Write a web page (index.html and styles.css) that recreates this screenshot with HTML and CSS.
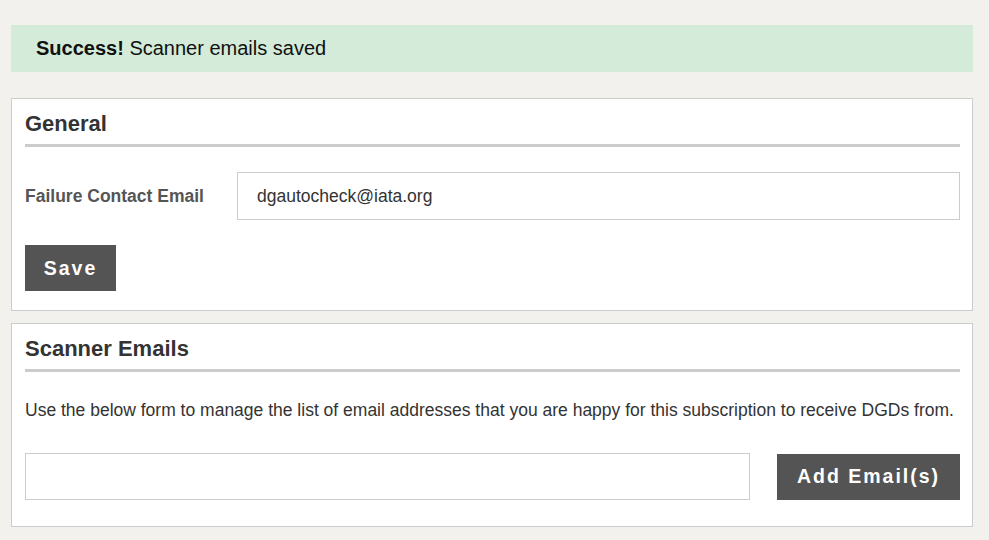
FILE: index.html
```html
<!DOCTYPE html>
<html>
<head>
<meta charset="utf-8">
<link rel="stylesheet" href="styles.css">
</head>
<body>
<div class="page">
  <div class="alert"><strong>Success!</strong> Scanner emails saved</div>

  <section class="panel">
    <h2 class="panel-title">General</h2>
    <div class="field-row">
      <label class="field-label">Failure Contact Email</label>
      <div class="text-input">dgautocheck@iata.org</div>
    </div>
    <button class="btn btn-save">Save</button>
  </section>

  <section class="panel">
    <h2 class="panel-title">Scanner Emails</h2>
    <p class="panel-text">Use the below form to manage the list of email addresses that you are happy for this subscription to receive DGDs from.</p>
    <div class="add-row">
      <div class="text-input add-input"></div>
      <button class="btn btn-add">Add Email(s)</button>
    </div>
  </section>
</div>
</body>
</html>
```
FILE: styles.css
```css
html, body {
  margin: 0;
  padding: 0;
  background: #f2f1ed;
  font-family: "Liberation Sans", Arial, sans-serif;
  color: #333;
}

.page {
  padding: 25px 16px 0 11px;
}

.alert {
  background: #d4ebd9;
  color: #111;
  font-size: 20px;
  line-height: 23px;
  height: 47px;
  box-sizing: border-box;
  padding: 12px 25px;
  margin-bottom: 26px;
}

.alert strong {
  font-weight: bold;
}

.panel {
  background: #fff;
  border: 1px solid #cccccc;
  padding: 13px 12px 19px 13px;
  margin-bottom: 12px;
}

.panel-title {
  margin: 0;
  font-size: 22px;
  line-height: 24px;
  font-weight: bold;
  color: #333;
  padding-bottom: 8px;
  border-bottom: 3px solid #cccccc;
}

.field-row {
  display: grid;
  grid-template-columns: 212px 1fr;
  align-items: center;
  margin-top: 25px;
}

.field-label {
  font-size: 17.5px;
  font-weight: bold;
  color: #555;
}

.text-input {
  height: 48px;
  box-sizing: border-box;
  border: 1px solid #cccccc;
  background: #fff;
  padding: 0 19px;
  font-size: 17.5px;
  line-height: 46px;
  color: #333;
}

.btn {
  display: block;
  border: none;
  background: #545454;
  color: #fff;
  font-family: "Liberation Sans", Arial, sans-serif;
  font-weight: bold;
  font-size: 19.5px;
  letter-spacing: 2px;
  height: 46px;
  padding: 0;
}

.btn-save {
  margin-top: 25px;
  width: 91px;
}

.panel-text {
  margin: 27px 0 0;
  font-size: 17.5px;
  line-height: 22px;
  color: #333;
}

.add-row {
  display: flex;
  align-items: center;
  gap: 27px;
  margin-top: 32px;
  margin-bottom: 7px;
}

.add-input {
  flex: 1;
  height: 47px;
}

.btn-add {
  width: 183px;
  flex: none;
}
```
